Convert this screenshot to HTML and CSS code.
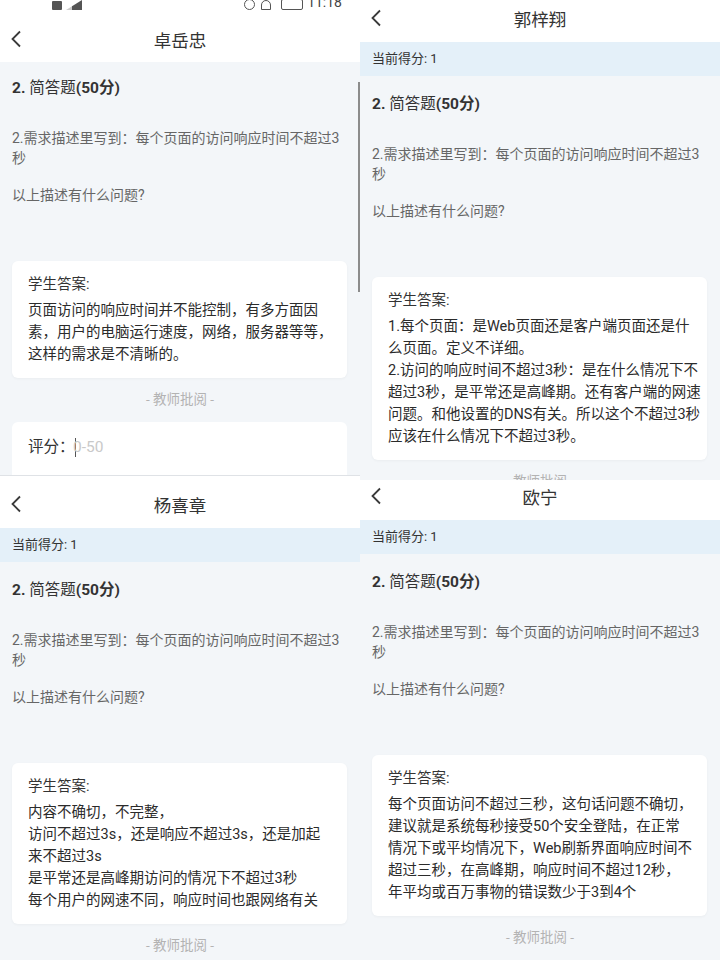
FILE: index.html
```html
<!DOCTYPE html>
<html lang="zh-CN">
<head>
    <meta charset="UTF-8">
    <meta name="viewport" content="width=device-width, initial-scale=1.0">
    <title>批阅 - 简答题</title>
    <link rel="stylesheet" href="styles.css">
</head>
<body>
<div class="board">

    <div class="col">
        <!-- 卓岳忠 -->
        <section class="phone phone--tl">
            <div class="statusbar">
                <div class="statusbar__row">
                    <div class="statusbar__left">
                        <span class="sb-icon sb-icon--sim"></span>
                        <span class="sb-icon sb-icon--bars"></span>
                    </div>
                    <div class="statusbar__right">
                        <span class="sb-icon sb-icon--ring"></span>
                        <span class="sb-icon sb-icon--bell"></span>
                        <span class="sb-icon sb-icon--battery"></span>
                        <span class="statusbar__time">11:18</span>
                    </div>
                </div>
            </div>
            <header class="topbar topbar--tl">
                <svg class="topbar__back" width="12" height="18" viewBox="0 0 12 18"><polyline points="10,1.5 2.5,9 10,16.5" fill="none" stroke="#3a3a3a" stroke-width="1.8"/></svg>
                <h1 class="topbar__title">卓岳忠</h1>
            </header>
            <div class="content content--tl">
                <h2 class="qtitle"><b>2.</b> 简答题<b>(50分)</b></h2>
                <p class="qtext qtext--first">2.需求描述里写到：每个页面的访问响应时间不超过3秒</p>
                <p class="qtext qtext--ask">以上描述有什么问题?</p>
                <div class="card">
                    <div class="card__label">学生答案:</div>
                    <div class="card__text">页面访问的响应时间并不能控制，有多方面因<br>素，用户的电脑运行速度，网络，服务器等等，<br>这样的需求是不清晰的。</div>
                </div>
                <div class="review">- 教师批阅 -</div>
                <div class="grade">
                    <span class="grade__label">评分：</span><span class="grade__cursor"></span><span class="grade__hint">0-50</span>
                </div>
            </div>
            <div class="scrollbar"></div>
        </section>

        <!-- 杨喜章 -->
        <section class="phone phone--bl">
            <header class="topbar topbar--bl">
                <svg class="topbar__back" width="12" height="18" viewBox="0 0 12 18"><polyline points="10,1.5 2.5,9 10,16.5" fill="none" stroke="#3a3a3a" stroke-width="1.8"/></svg>
                <h1 class="topbar__title">杨喜章</h1>
            </header>
            <div class="scorebar">当前得分: 1</div>
            <div class="content">
                <h2 class="qtitle"><b>2.</b> 简答题<b>(50分)</b></h2>
                <p class="qtext qtext--first">2.需求描述里写到：每个页面的访问响应时间不超过3秒</p>
                <p class="qtext qtext--ask">以上描述有什么问题?</p>
                <div class="card">
                    <div class="card__label">学生答案:</div>
                    <div class="card__text">内容不确切，不完整，<br>访问不超过3s，还是响应不超过3s，还是加起<br>来不超过3s<br>是平常还是高峰期访问的情况下不超过3秒<br>每个用户的网速不同，响应时间也跟网络有关</div>
                </div>
                <div class="review">- 教师批阅 -</div>
            </div>
        </section>
    </div>

    <div class="col">
        <!-- 郭梓翔 -->
        <section class="phone phone--tr">
            <div class="shift shift--tr">
                <header class="topbar">
                    <svg class="topbar__back" width="12" height="18" viewBox="0 0 12 18"><polyline points="10,1.5 2.5,9 10,16.5" fill="none" stroke="#3a3a3a" stroke-width="1.8"/></svg>
                    <h1 class="topbar__title">郭梓翔</h1>
                </header>
                <div class="scorebar">当前得分: 1</div>
                <div class="content">
                    <h2 class="qtitle"><b>2.</b> 简答题<b>(50分)</b></h2>
                    <p class="qtext qtext--first">2.需求描述里写到：每个页面的访问响应时间不超过3秒</p>
                    <p class="qtext qtext--ask">以上描述有什么问题?</p>
                    <div class="card">
                        <div class="card__label">学生答案:</div>
                        <div class="card__text">1.每个页面：是Web页面还是客户端页面还是什<br>么页面。定义不详细。<br>2.访问的响应时间不超过3秒：是在什么情况下不<br>超过3秒，是平常还是高峰期。还有客户端的网速<br>问题。和他设置的DNS有关。所以这个不超过3秒<br>应该在什么情况下不超过3秒。</div>
                    </div>
                    <div class="review">- 教师批阅 -</div>
                </div>
            </div>
        </section>

        <!-- 欧宁 -->
        <section class="phone phone--br">
            <div class="shift shift--br">
                <header class="topbar">
                    <svg class="topbar__back" width="12" height="18" viewBox="0 0 12 18"><polyline points="10,1.5 2.5,9 10,16.5" fill="none" stroke="#3a3a3a" stroke-width="1.8"/></svg>
                    <h1 class="topbar__title">欧宁</h1>
                </header>
                <div class="scorebar">当前得分: 1</div>
                <div class="content">
                    <h2 class="qtitle"><b>2.</b> 简答题<b>(50分)</b></h2>
                    <p class="qtext qtext--first">2.需求描述里写到：每个页面的访问响应时间不超过3秒</p>
                    <p class="qtext qtext--ask">以上描述有什么问题?</p>
                    <div class="card">
                        <div class="card__label">学生答案:</div>
                        <div class="card__text">每个页面访问不超过三秒，这句话问题不确切，<br>建议就是系统每秒接受50个安全登陆，在正常<br>情况下或平均情况下，Web刷新界面响应时间不<br>超过三秒，在高峰期，响应时间不超过12秒，<br>年平均或百万事物的错误数少于3到4个</div>
                    </div>
                    <div class="review">- 教师批阅 -</div>
                </div>
            </div>
        </section>
    </div>

</div>
</body>
</html>
```

FILE: styles.css
```css
* {
    box-sizing: border-box;
}

body {
    margin: 0;
    width: 720px;
    height: 960px;
    overflow: hidden;
    background: #fff;
    font-family: Roboto, "Noto Sans CJK SC", sans-serif;
    color: #333;
}

.board {
    display: grid;
    grid-template-columns: 360px 360px;
}

.col {
    display: flex;
    flex-direction: column;
}

.phone {
    position: relative;
    overflow: hidden;
    background: #f3f6f9;
}

.phone--tl {
    height: 476px;
    border-bottom: 1px solid #dfe2e6;
}

.phone--bl {
    height: 484px;
}

.phone--tr,
.phone--br {
    height: 480px;
}

.shift--tr {
    margin-top: -6px;
}

.shift--br {
    margin-top: -8px;
}

/* 状态栏，只露出下半截 */
.statusbar {
    height: 10px;
    overflow: hidden;
    background: #fff;
}

.statusbar__row {
    display: flex;
    justify-content: space-between;
    align-items: flex-end;
    height: 16px;
    margin-top: -6px;
    padding: 0 18px 0 52px;
}

.statusbar__left,
.statusbar__right {
    display: flex;
    align-items: flex-end;
    gap: 4px;
}

.statusbar__time {
    font-size: 14px;
    line-height: 16px;
    color: #444;
}

.sb-icon {
    display: block;
    background: #555;
}

.sb-icon--sim {
    width: 10px;
    height: 9px;
    border-radius: 1px;
}

.sb-icon--bars {
    width: 16px;
    height: 10px;
    background: linear-gradient(90deg, #ccc 0 40%, #555 40% 100%);
    clip-path: polygon(0 100%, 100% 0, 100% 100%);
}

.sb-icon--ring {
    width: 11px;
    height: 11px;
    border: 1.5px solid #555;
    border-radius: 50%;
    background: none;
    margin-right: 2px;
}

.sb-icon--bell {
    width: 10px;
    height: 10px;
    border: 1.5px solid #555;
    border-radius: 5px 5px 0 0;
    background: none;
    margin-right: 6px;
}

.sb-icon--battery {
    width: 22px;
    height: 11px;
    border: 1.5px solid #555;
    border-radius: 2px;
    background: none;
}

/* 顶部标题栏 */
.topbar {
    display: grid;
    grid-template-columns: 40px 1fr 40px;
    align-items: center;
    height: 48px;
    background: #fff;
}

.topbar--tl {
    height: 52px;
    padding-top: 6px;
}

.topbar--bl {
    height: 52px;
    padding-top: 4px;
}

.topbar__back {
    margin-left: 10px;
}

.topbar__title {
    grid-column: 2;
    margin: 0;
    text-align: center;
    font-size: 17.5px;
    font-weight: 400;
    color: #333;
}

.scorebar {
    height: 34px;
    padding: 0 12px;
    line-height: 34px;
    font-size: 13px;
    font-weight: 400;
    background: #e4f0f9;
    color: #333;
}

.content {
    padding: 17px 12px 0;
}

.content--tl {
    padding-top: 15px;
}

.qtitle {
    margin: 0;
    font-size: 15.5px;
    line-height: 22px;
    font-weight: 400;
    color: #333;
}

.qtitle b {
    font-weight: 700;
}

.qtext {
    margin: 17px 0 0;
    font-size: 14px;
    line-height: 20px;
    color: #666;
}

.qtext--first {
    margin-top: 29px;
}

.card {
    margin: 56px 1px 0 0;
    padding: 13px 16px 12px;
    background: #fff;
    border-radius: 6px;
    box-shadow: 0 1px 3px rgba(0, 0, 0, 0.04);
}

.card__label {
    font-size: 14.5px;
    line-height: 22px;
    margin-bottom: 4px;
}

.card__text {
    font-size: 14.5px;
    line-height: 22px;
    white-space: nowrap;
    color: #2b2b2b;
}

.review {
    margin-top: 11px;
    text-align: center;
    font-size: 13.5px;
    line-height: 20px;
    color: #b3b3b3;
}

.grade {
    display: flex;
    align-items: flex-start;
    margin: 13px 1px 0 0;
    height: 80px;
    padding: 14px 16px 0;
    background: #fff;
    border-radius: 6px;
    font-size: 15.5px;
    line-height: 22px;
}

.grade__cursor {
    width: 1.5px;
    height: 19px;
    margin-top: 2px;
    background: #555;
}

.grade__hint {
    color: #c9c9c9;
    margin-left: -3px;
}

.scrollbar {
    position: absolute;
    top: 82px;
    right: 0;
    width: 2px;
    height: 210px;
    background: #8c8c8c;
}
```
